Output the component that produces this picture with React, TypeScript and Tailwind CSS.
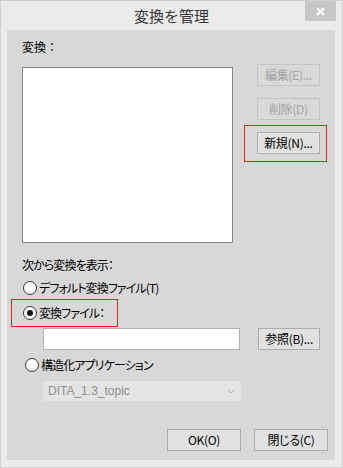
import React from "react"

const font = { fontFamily: '"Noto Sans CJK JP", "Liberation Sans", sans-serif' }

function Btn({ label, disabled, className = "" }: { label: string; disabled?: boolean; className?: string }) {
  return (
    <div
      className={
        "h-[22px] flex items-center justify-center text-[12px] leading-none border tracking-[-0.3px] [font-feature-settings:'palt'] " +
        (disabled
          ? "bg-[#d9d9d9] border-[#c4c4c4] text-[#a3a3a3] "
          : "bg-[#e1e1e1] border-[#adadad] text-black ") +
        className
      }
    >
      {label}
    </div>
  )
}

function Radio({ checked, label }: { checked?: boolean; label: string }) {
  return (
    <div className="flex items-center gap-[2px] h-[16px]">
      <div className="w-[14px] h-[14px] rounded-full border border-[#333333] bg-white flex items-center justify-center">
        {checked && <div className="w-[6px] h-[6px] rounded-full bg-[#111111]" />}
      </div>
      <span className="text-[12px] leading-none text-black tracking-[-0.9px] [font-feature-settings:'palt']">{label}</span>
    </div>
  )
}

export default function App() {
  return (
    <div style={font} className="w-[343px] h-[468px] bg-[#ebebeb] border border-[#d0d0d0] flex flex-col">
      {/* title bar */}
      <div className="relative h-[29px] flex items-center justify-center">
        <span className="text-[15px] text-[#333333] mt-[1px]">変換を管理</span>
        <div className="absolute right-[6px] top-0 w-[31px] h-[20px] bg-[#c6c6c6] flex items-center justify-center">
          <svg width="9" height="9" viewBox="0 0 9 9">
            <path d="M1 1 L8 8 M8 1 L1 8" stroke="#fff" strokeWidth="2" />
          </svg>
        </div>
      </div>

      {/* panel */}
      <div className="ml-[6px] w-[328px] h-[430px] bg-[#d8d8d8] px-[15px] flex flex-col">
        <div className="mt-[9px] h-[16px] flex items-center text-[12px] text-black">変換：</div>

        <div className="mt-[9px] flex">
          <div className="mt-[3px] w-[213px] h-[176px] bg-white border border-[#828790]" />
          <div className="ml-[24px] w-[64px] flex flex-col relative">
            <Btn label="編集(E)..." disabled />
            <Btn label="削除(D)" disabled className="mt-[12px]" />
            <Btn label="新規(N)..." className="mt-[12px] outline outline-1 outline-[#e6e6e6] -outline-offset-2" />
            <div className="absolute left-[-13px] top-[61px] w-[83px] h-[37px] border border-[#e3261f]" />
          </div>
        </div>

        <div className="mt-[14px] h-[16px] flex items-center text-[12px] text-black tracking-[-0.9px] [font-feature-settings:'palt']">次から変換を表示：</div>

        <div className="mt-[7px] ml-[1px]">
          <Radio label="デフォルト変換ファイル(T)" />
        </div>
        <div className="mt-[9px] ml-[1px] relative">
          <Radio checked label="変換ファイル：" />
          <div className="absolute left-[-12px] top-[-6px] w-[107px] h-[28px] border border-[#e3261f]" />
        </div>

        <div className="mt-[7px] flex items-center">
          <div className="ml-[21px] w-[198px] h-[22px] bg-white border border-[#b0b0b0]" />
          <Btn label="参照(B)..." className="ml-[18px] w-[62px]" />
        </div>

        <div className="mt-[7px] ml-[3px]">
          <Radio label="構造化アプリケーション" />
        </div>

        <div className="mt-[8px] ml-[21px] w-[198px] h-[20px] bg-[#e4e4e4] flex items-center justify-between pl-[5px] pr-[6px]">
          <span className="text-[12px] text-[#8e8e8e]" style={{ fontFamily: '"Liberation Sans", sans-serif' }}>DITA_1.3_topic</span>
          <svg width="8" height="5" viewBox="0 0 8 5">
            <path d="M0.5 0.5 L4 4 L7.5 0.5" stroke="#b5b5b5" fill="none" strokeWidth="1" />
          </svg>
        </div>

        <div className="mt-[28px] flex justify-end mr-[-8px]">
          <Btn label="OK(O)" className="w-[74px]" />
          <Btn label="閉じる(C)" className="ml-[13px] w-[74px]" />
        </div>
      </div>
    </div>
  )
}
